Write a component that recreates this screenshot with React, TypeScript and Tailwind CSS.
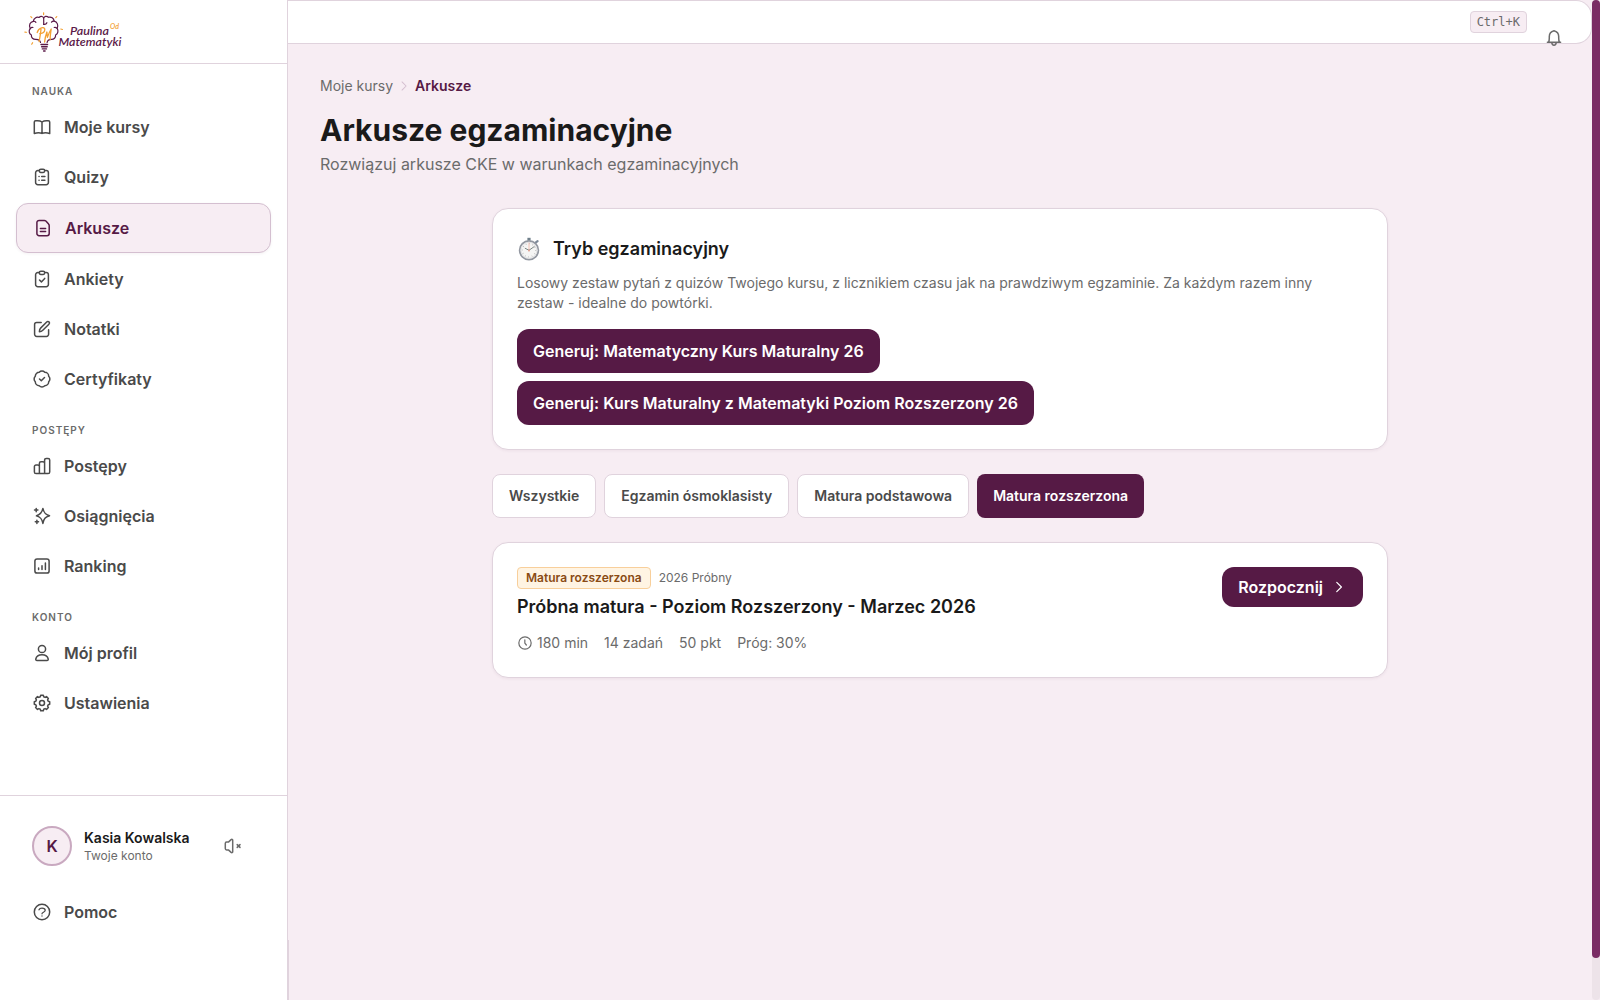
import React from "react";

interface IconProps {
  className?: string;
  children: React.ReactNode;
}

// Base for all line icons, drawn on a 20px grid
const Icon: React.FC<IconProps> = ({ className = "size-5", children }) => (
  <svg
    viewBox="0 0 20 20"
    className={`shrink-0 ${className}`}
    fill="none"
    stroke="currentColor"
    strokeWidth="1.5"
    strokeLinecap="round"
    strokeLinejoin="round"
  >
    {children}
  </svg>
);

const ClipboardShape = () => (
  <>
    <path d="M7.3 3.6H5.8a2.2 2.2 0 0 0-2.2 2.2v9.7a2.2 2.2 0 0 0 2.2 2.2h8.4a2.2 2.2 0 0 0 2.2-2.2V5.8a2.2 2.2 0 0 0-2.2-2.2h-1.5" />
    <path d="M7.3 3.8c0-.9.6-1.5 1.5-1.5h2.4c.9 0 1.5.6 1.5 1.5s-.6 1.6-1.5 1.6H8.8c-.9 0-1.5-.7-1.5-1.6Z" />
  </>
);

const BookIcon = () => (
  <Icon>
    <path d="M10 5v11.400M10 5C8.700 4 7.200 3.700 5.500 3.700H3.700c-.9 0-1.400.5-1.400 1.300v11.500c2.600-.8 5.400-.9 7.700-.1 2.300-.8 5.100-.7 7.700.1V5c0-.8-.5-1.300-1.400-1.300h-1.800C12.800 3.700 11.300 4 10 5Z" />
  </Icon>
);

const ClipboardListIcon = () => (
  <Icon>
    <ClipboardShape />
    <path d="M7 9.500h.1M9.700 9.500h3.200M7 13.200h.1M9.700 13.200h3.200" />
  </Icon>
);

const FileIcon = () => (
  <Icon>
    <path d="M3.900 4.600a2.200 2.200 0 0 1 2.200-2.200h5.200c.6 0 1.200.2 1.600.7l2.700 3c.4.4.6.9.6 1.500v7.900a2.200 2.200 0 0 1-2.200 2.200H6.100a2.200 2.200 0 0 1-2.200-2.200ZM7.400 10.600h5.200M7.400 13.600h5.200" />
  </Icon>
);

const ClipboardCheckIcon = () => (
  <Icon>
    <ClipboardShape />
    <path d="m7.500 11 1.900 1.900 3.300-3.500" />
  </Icon>
);

const EditIcon = () => (
  <Icon>
    <path d="M9.200 3.400H4.700a2.100 2.100 0 0 0-2.100 2.100v9.800a2.100 2.100 0 0 0 2.100 2.100h9.800a2.100 2.100 0 0 0 2.100-2.100v-4.500" />
    <path d="M7.400 12.700c0-1.500.3-2.700 1.200-3.600l6.100-6.100c.7-.7 1.700-.7 2.300-.1s.6 1.600-.1 2.300l-6.100 6.100c-.9.900-2 1.400-3.400 1.400Z" />
  </Icon>
);

const BadgeIcon = () => (
  <Icon>
    <path d="M7.200 3.300a3.900 3.900 0 0 1 5.600 0 3.900 3.900 0 0 1 3.900 3.900 3.900 3.900 0 0 1 0 5.600 3.900 3.900 0 0 1-3.900 3.900 3.900 3.900 0 0 1-5.600 0 3.900 3.900 0 0 1-3.900-3.900 3.900 3.900 0 0 1 0-5.600 3.900 3.900 0 0 1 3.900-3.900Z" />
    <path d="m7.500 10 1.800 1.700 3.200-3.200" />
  </Icon>
);

const BarsIcon = () => (
  <Icon>
    <path d="M7.400 17.600H4a1.600 1.600 0 0 1-1.600-1.600v-5.400A1.600 1.600 0 0 1 4 9h1.800a1.600 1.600 0 0 1 1.600 1.600ZM7.400 17.600h5.200V7.300A1.600 1.600 0 0 0 11 5.700H9a1.600 1.600 0 0 0-1.600 1.600v3M12.600 17.600h3.500a1.600 1.600 0 0 0 1.600-1.600V4A1.600 1.600 0 0 0 16.100 2.400h-1.900A1.600 1.600 0 0 0 12.600 4v4" />
  </Icon>
);

const SparklesIcon = () => (
  <Icon>
    <path d="M10.900 2.400c.9 4.400 2.300 6.100 6.600 7.400-4.300 1.300-5.700 3-6.600 7.600-.9-4.600-2.300-6.300-6.400-7.600 4.100-1.300 5.500-3 6.400-7.400Z" />
    <path d="M4.200 2.400v3.400M2.500 4.100h3.400M4.900 14.200v3.200M3.300 15.800h3.200" />
  </Icon>
);

const RankingIcon = () => (
  <Icon>
    <rect x="2.900" y="2.900" width="14.200" height="14.200" rx="2.200" />
    <path d="M6.600 11.900v1.500M10 9.800v3.600M13.400 6.900v6.500" />
  </Icon>
);

const UserIcon = () => (
  <Icon>
    <circle cx="10" cy="6" r="3.600" />
    <path d="M5 17.600c-.9 0-1.400-.7-1.200-1.600.5-2.400 3-4.200 6.200-4.200s5.700 1.800 6.200 4.200c.2.900-.3 1.600-1.200 1.600Z" />
  </Icon>
);

const CogIcon = () => (
  <Icon>
    <path d="M17.700 8.700v2.600L16.200 11.700 15.600 13.100 16.400 14.500 14.500 16.400 13.100 15.600 11.700 16.200 11.300 17.700H8.700L8.300 16.200 6.900 15.600 5.500 16.400 3.600 14.500 4.400 13.100 3.800 11.700 2.300 11.300V8.700L3.800 8.300 4.400 6.900 3.600 5.500 5.500 3.600 6.900 4.400 8.300 3.800 8.700 2.300h2.600L11.700 3.800 13.100 4.400 14.500 3.600 16.400 5.500 15.600 6.900 16.200 8.300Z" />
    <circle cx="10" cy="10" r="2.500" />
  </Icon>
);

const HelpIcon = () => (
  <Icon>
    <circle cx="10" cy="10" r="7.700" />
    <path d="M7 7.800C7.400 6.700 8.500 6.100 10 6.100c1.800 0 3.200.9 3.200 2.200 0 2-3.200 1.800-3.200 3.500M10 13.900v.1" strokeWidth="1.300" />
  </Icon>
);

const MuteIcon = () => (
  <Icon>
    <path d="M9.700 4.300v11.400c0 .9-.9 1.300-1.600.7l-2.700-2.500H3.600c-.8 0-1.300-.5-1.300-1.300V7.400c0-.8.500-1.300 1.300-1.300h1.800l2.700-2.500c.7-.6 1.600-.2 1.600.7ZM14.200 8.600l2.800 2.800M17 8.600l-2.800 2.800" />
  </Icon>
);

const BellIcon = () => (
  <Icon>
    <path d="M3.400 14.200h13.200M4.600 14.200c.5-1.100.7-2.100.7-4.200V8.400C5.300 5.500 7.100 3.500 10 2.700c2.900.8 4.700 2.800 4.700 5.700V10c0 2.100.2 3.100.7 4.200M7.800 14.500c.1 1.800.9 2.700 2.200 2.700s2.100-.9 2.200-2.700" />
  </Icon>
);

const ClockIcon = () => (
  <Icon className="size-4">
    <circle cx="10" cy="10" r="7.700" />
    <path d="M9.800 6v4.200l1.900 2.300" />
  </Icon>
);

const ChevronIcon: React.FC<{ className: string }> = ({ className }) => (
  <Icon className={className}>
    <path d="m7.200 4.200 5.800 5.800-5.800 5.800" />
  </Icon>
);

const Stopwatch = () => (
  <svg viewBox="0 0 24 24" className="size-6 shrink-0" fill="none" strokeLinecap="round">
    <path d="M12 .8v2.800" stroke="#6f7f8a" strokeWidth="3.200" strokeLinecap="butt" />
    <path d="m18.600 5.600 2-1.500" stroke="#7d8a99" strokeWidth="2.200" />
    <circle cx="12" cy="13.300" r="9.400" fill="#f5f5f4" stroke="#9297a0" strokeWidth="1.700" />
    <circle cx="12" cy="13.300" r="8" stroke="#dcdde0" strokeWidth=".8" />
    <circle cx="12" cy="13.300" r="6.600" stroke="#a3a3a3" strokeWidth="1.200" strokeDasharray=".5 2.956" strokeLinecap="butt" />
    <path d="M12 14.500V6" stroke="#f2b5a6" strokeWidth=".8" />
    <path d="m8.200 11.300 3.800 2 5.200-3.700" stroke="#6d7a78" strokeWidth=".9" />
    <circle cx="12" cy="13.300" r=".9" fill="#e5a08f" />
  </svg>
);

const Logo = () => (
  <svg viewBox="0 0 100 40" className="h-10 w-[100px]" fill="none" strokeLinecap="round" strokeLinejoin="round">
    <g stroke="#5b1a48" strokeWidth="1.200">
      <path d="M16.500 30.500c-.3-2.500-2-3-4.500-3.200-3 .2-5-1.700-4.600-4.300C5 21.700 4.500 18.600 6.200 16.600 4.500 13 6.200 10 9.300 9.300 9.700 6.500 12.500 4.500 15 5.500c2-1.800 4.600-1.300 4.700 1.300M19.700 12.500V6.500c.3-2.300 3-2.900 4.800-1.200 2.800-.9 5.300 1 5.600 3.800 3.200.8 4.600 4.200 3 7.300 1.600 2.300.9 5.400-1.500 6.600.3 2.600-1.700 4.500-4.300 4.300-2.400.2-3.900 1-4.200 3.200" />
      <path d="M6.200 16.600c.8-1 1.800-1.300 2.800-1.100M9.300 9.300c1.200-.2 2 .2 2.600 1M19.700 12.300c1.600.3 2.700-.4 3.200-1.600M30.100 9.100c-1.200-.2-2 .3-2.600 1.100M33.100 16.400c-.9-.9-1.800-1.100-2.900-.9" />
      <path d="M17 32.500h6.600M17.600 34.700h5.600M18.300 36.900h4.200M19.600 39h1.500" strokeWidth="1.400" />
    </g>
    <g stroke="#f3a133" strokeWidth="1.200">
      <path d="M19.600.8v1.800M6.800 4.600l1 1.100M31.800 5.700l1-1.100M.8 20l1.500.3M36.800 17l1.600.5M8.600 30.700l-.9 1.500" />
      <path d="M17 17.500c-.5 5-1.300 8.500-1.900 12M13.200 20.500c1.400-5.200 7.800-6.300 7.600-3-.1 2.600-2.400 4-5 4.200M20.600 30c.3-3.400 1.200-7 2.300-10 .2 2.300.4 4 .5 5.400 1-3 2.300-6.100 3.800-8.400-.6 4.300-1.200 7.500-1 10.600" strokeWidth="1.300" />
    </g>
    <g fontFamily="Lato, 'Liberation Sans', sans-serif" fontStyle="italic" fontWeight="600">
      <text x="46" y="22.800" fontSize="11" textLength="39" lengthAdjust="spacingAndGlyphs" fill="#5b1a48">Paulina</text>
      <text x="34.500" y="34.300" fontSize="11" textLength="63" lengthAdjust="spacingAndGlyphs" fill="#5b1a48">Matematyki</text>
      <text x="86" y="17" fontSize="7.500" textLength="9" lengthAdjust="spacingAndGlyphs" fill="#f3a133">Od</text>
    </g>
  </svg>
);

interface NavItem {
  label: string;
  icon: React.FC;
  active?: boolean;
}

const sections: { title: string; items: NavItem[] }[] = [
  {
    title: "Nauka",
    items: [
      { label: "Moje kursy", icon: BookIcon },
      { label: "Quizy", icon: ClipboardListIcon },
      { label: "Arkusze", icon: FileIcon, active: true },
      { label: "Ankiety", icon: ClipboardCheckIcon },
      { label: "Notatki", icon: EditIcon },
      { label: "Certyfikaty", icon: BadgeIcon },
    ],
  },
  {
    title: "Postępy",
    items: [
      { label: "Postępy", icon: BarsIcon },
      { label: "Osiągnięcia", icon: SparklesIcon },
      { label: "Ranking", icon: RankingIcon },
    ],
  },
  {
    title: "Konto",
    items: [
      { label: "Mój profil", icon: UserIcon },
      { label: "Ustawienia", icon: CogIcon },
    ],
  },
];

const filters = [
  "Wszystkie",
  "Egzamin ósmoklasisty",
  "Matura podstawowa",
  "Matura rozszerzona",
];

const courses = [
  "Matematyczny Kurs Maturalny 26",
  "Kurs Maturalny z Matematyki Poziom Rozszerzony 26",
];

const NavLink: React.FC<{ item: NavItem }> = ({ item }) => {
  const ItemIcon = item.icon;
  return (
    <a
      className={`flex items-center gap-3 rounded-xl px-4 font-semibold ${
        item.active
          ? "h-[50px] border border-[#d4bfd0] bg-[#f7edf3] text-[#561a45] shadow-[0_1px_3px_rgba(86,26,69,0.06)]"
          : "h-12 text-[#4a4a4a]"
      }`}
    >
      <ItemIcon />
      {item.label}
    </a>
  );
};

const Sidebar = () => (
  <aside className="flex w-72 shrink-0 flex-col border-r border-[#e0d3dd] bg-white">
    <div className="flex h-16 items-center border-b border-[#e0d3dd] px-6">
      <Logo />
    </div>

    <nav className="flex flex-1 flex-col gap-5 px-4 pt-5">
      {sections.map((section) => (
        <div key={section.title}>
          <p className="mb-1 px-4 text-[10px] leading-[15px] font-semibold tracking-[1px] text-[#6b6b6b] uppercase">
            {section.title}
          </p>
          <div className="flex flex-col gap-0.5">
            {section.items.map((item) => (
              <NavLink key={item.label} item={item} />
            ))}
          </div>
        </div>
      ))}
    </nav>

    {/* Account */}
    <div className="h-[205px] border-t border-[#e0d3dd] px-4 pt-[30px]">
      <div className="flex items-center gap-3 pr-7 pl-4">
        <div className="flex size-10 items-center justify-center rounded-full border-2 border-[#c9a9c0] bg-[#f7edf3] font-semibold text-[#561a45]">
          K
        </div>
        <div className="flex-1 pt-0.5">
          <p className="text-sm leading-[18px] font-semibold text-[#1a1a1a]">Kasia Kowalska</p>
          <p className="text-xs leading-[18px] text-[#6b6b6b]">Twoje konto</p>
        </div>
        <div className="text-[#6b6b6b]">
          <MuteIcon />
        </div>
      </div>
      <div className="mt-[22px]">
        <NavLink item={{ label: "Pomoc", icon: HelpIcon }} />
      </div>
    </div>
  </aside>
);

const TopBar = () => (
  <header className="flex h-11 items-start justify-end gap-[17px] rounded-r-2xl border border-l-0 border-[#e0d3dd] bg-white pr-[27px]">
    <kbd className="mt-2.5 flex h-[22px] items-center rounded border border-[#e0d3dd] bg-[#f7edf3] px-1.5 font-['DejaVu_Sans_Mono',monospace] text-xs text-[#6b6b6b]">
      Ctrl+K
    </kbd>
    <div className="mt-[27px] text-[#6b6b6b]">
      <BellIcon />
    </div>
  </header>
);

const App: React.FC = () => {
  const activeFilter = "Matura rozszerzona";

  return (
    <div className="flex h-screen overflow-hidden bg-[#f7edf3] font-[Inter,sans-serif] text-[#1a1a1a] antialiased">
      <Sidebar />

      <div className="relative flex-1">
        <TopBar />
        <main className="px-8 pt-8">
          <div className="flex h-5 items-center gap-1 text-sm">
            <span className="text-[#6b6b6b]">Moje kursy</span>
            <ChevronIcon className="size-3.5 text-[#d4bfd0]" />
            <span className="font-semibold text-[#561a45]">Arkusze</span>
          </div>
          <h1 className="mt-4 text-3xl leading-9 font-bold">Arkusze egzaminacyjne</h1>
          <p className="mt-1 text-[#6b6b6b]">Rozwiązuj arkusze CKE w warunkach egzaminacyjnych</p>

          <div className="mx-auto mt-8 flex max-w-4xl flex-col gap-6">
            {/* Exam mode */}
            <section className="rounded-2xl border border-[#e0d3dd] bg-white p-6 shadow-[0_1px_3px_rgba(86,26,69,0.06)]">
              <div className="flex h-8 items-center gap-3">
                <Stopwatch />
                <h2 className="text-lg font-semibold">Tryb egzaminacyjny</h2>
              </div>
              <p className="mt-2 text-sm text-[#6b6b6b]">
                Losowy zestaw pytań z quizów Twojego kursu, z licznikiem czasu jak na prawdziwym
                egzaminie. Za każdym razem inny zestaw - idealne do powtórki.
              </p>
              <div className="mt-4 flex flex-col items-start gap-2">
                {courses.map((course) => (
                  <button
                    key={course}
                    className="h-11 rounded-xl bg-[#561a45] px-4 font-semibold text-white"
                  >
                    Generuj: {course}
                  </button>
                ))}
              </div>
            </section>

            {/* Filters */}
            <div className="flex gap-2">
              {filters.map((filter) => (
                <button
                  key={filter}
                  className={`h-11 rounded-lg px-4 text-sm font-semibold ${
                    filter === activeFilter
                      ? "bg-[#561a45] text-white"
                      : "border border-[#e0d3dd] bg-white text-[#4a4a4a]"
                  }`}
                >
                  {filter}
                </button>
              ))}
            </div>

            {/* Exam sheet */}
            <section className="flex items-start justify-between rounded-2xl border border-[#e0d3dd] bg-white p-6 shadow-[0_1px_3px_rgba(86,26,69,0.06)]">
              <div>
                <div className="flex items-center gap-2 text-xs">
                  <span className="flex h-[22px] items-center rounded border border-[#f8cf9b] bg-[#fff4e3] px-2 font-semibold text-[#8a4b14]">
                    Matura rozszerzona
                  </span>
                  <span className="text-[#6b6b6b]">2026 Próbny</span>
                </div>
                <h3 className="mt-1 text-lg font-semibold">
                  Próbna matura - Poziom Rozszerzony - Marzec 2026
                </h3>
                <div className="mt-3 flex gap-4 text-sm text-[#6b6b6b]">
                  <span className="flex items-center gap-1">
                    <ClockIcon />
                    180 min
                  </span>
                  <span>14 zadań</span>
                  <span>50 pkt</span>
                  <span>Próg: 30%</span>
                </div>
              </div>
              <button className="flex h-10 items-center gap-2 rounded-xl bg-[#561a45] px-4 font-semibold text-white">
                Rozpocznij
                <ChevronIcon className="size-4" />
              </button>
            </section>
          </div>
        </main>
        <div className="absolute bottom-0 left-0 h-[60px] w-px bg-[#e0d3dd]" />
      </div>

      {/* Scrollbar */}
      <div className="w-2 shrink-0 rounded-full bg-[#ede3e9]">
        <div className="h-[958px] rounded-full bg-[#7a2c64]" />
      </div>
    </div>
  );
};

export default App;
